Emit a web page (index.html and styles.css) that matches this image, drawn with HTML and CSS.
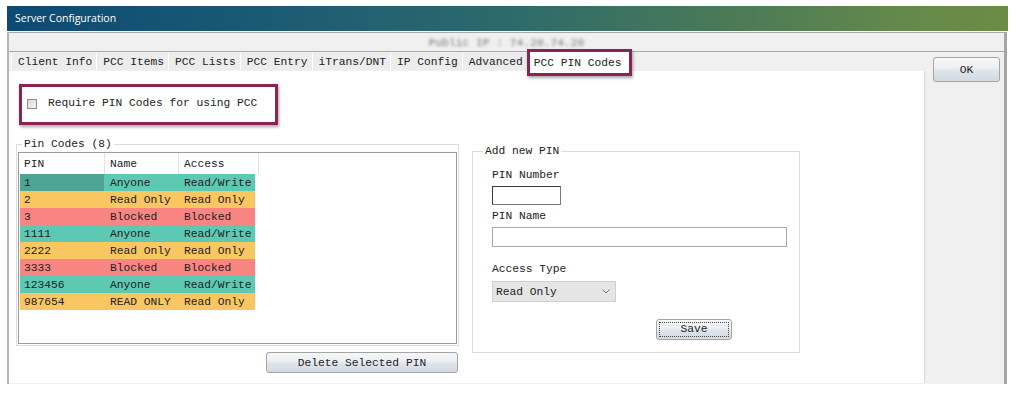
FILE: index.html
```html
<!DOCTYPE html>
<html lang="en">
<head>
<meta charset="utf-8">
<title>Server Configuration</title>
<link rel="stylesheet" href="styles.css">
</head>
<body>
<div class="window">
  <div class="titlebar">Server Configuration</div>
  <div class="frame">
    <div class="addr"><span class="blur">Public IP : 74.20.74.20</span></div>
    <div class="main">
      <div class="tabctl">
        <div class="tabstrip">
          <div class="tab">Client Info</div>
          <div class="tab">PCC Items</div>
          <div class="tab">PCC Lists</div>
          <div class="tab">PCC Entry</div>
          <div class="tab">iTrans/DNT</div>
          <div class="tab">IP Config</div>
          <div class="tab">Advanced</div>
          <div class="tab active">PCC PIN Codes</div>
        </div>
        <div class="page">
          <div class="require">
            <span class="cb"></span>
            <span>Require PIN Codes for using PCC</span>
          </div>
          <div class="cols">
            <div class="leftcol">
              <fieldset class="group pins">
                <legend>Pin Codes (8)</legend>
                <div class="listview">
                  <div class="lv-head"><div>PIN</div><div>Name</div><div>Access</div></div>
                  <div class="lv-row rw"><div class="sel">1</div><div>Anyone</div><div>Read/Write</div></div>
                  <div class="lv-row ro"><div>2</div><div>Read Only</div><div>Read Only</div></div>
                  <div class="lv-row bl"><div>3</div><div>Blocked</div><div>Blocked</div></div>
                  <div class="lv-row rw"><div>1111</div><div>Anyone</div><div>Read/Write</div></div>
                  <div class="lv-row ro"><div>2222</div><div>Read Only</div><div>Read Only</div></div>
                  <div class="lv-row bl"><div>3333</div><div>Blocked</div><div>Blocked</div></div>
                  <div class="lv-row rw"><div>123456</div><div>Anyone</div><div>Read/Write</div></div>
                  <div class="lv-row ro"><div>987654</div><div>READ ONLY</div><div>Read Only</div></div>
                </div>
              </fieldset>
              <button class="btn del">Delete Selected PIN</button>
            </div>
            <fieldset class="group addpin">
              <legend>Add new PIN</legend>
              <div class="lbl l1">PIN Number</div>
              <div class="input num"></div>
              <div class="lbl l2">PIN Name</div>
              <div class="input name"></div>
              <div class="lbl l3">Access Type</div>
              <div class="select">
                <span>Read Only</span>
                <svg width="8" height="5" viewBox="0 0 8 5"><polyline points="0.5,0.5 4,4 7.5,0.5" fill="none" stroke="#707070" stroke-width="1"/></svg>
              </div>
              <button class="btn save"><span class="focus">Save</span></button>
            </fieldset>
          </div>
        </div>
      </div>
      <div class="side"><button class="btn ok">OK</button></div>
    </div>
  </div>
</div>
</body>
</html>
```

FILE: styles.css
```css
body {
  margin: 0;
  background: #fff;
  font-family: "Courier New", "Nimbus Mono PS", "FreeMono", "Liberation Mono", monospace;
  font-size: 11.25px;
  color: #222;
}

.window {
  margin: 6px 0 0 7px;
  width: 1001px;
}

.titlebar {
  height: 25px;
  line-height: 25px;
  padding-left: 8px;
  color: #fff;
  font-family: "Open Sans", "Noto Sans", sans-serif;
  font-size: 10.5px;
  background: linear-gradient(90deg, #0c4a74 0%, #1a5a74 25%, #2c6a6c 50%, #4a7a56 72%, #64894a 90%, #6b8c45 100%);
}

.frame {
  box-sizing: border-box;
  width: 1000px;
  height: 352px;
  border-left: 2px solid #b5b5b5;
  border-right: 3px solid #a6a6a6;
  background: #f0f0f0;
}

.addr {
  box-sizing: border-box;
  margin-top: 1px;
  height: 20px;
  border-top: 1px solid #a9a9a9;
  border-bottom: 1px solid #a9a9a9;
  display: flex;
  align-items: center;
  justify-content: center;
  padding-top: 1px;
}

.blur {
  color: #7a7a7a;
  filter: blur(1.4px);
}

.main {
  display: flex;
  height: 331px;
}

.tabctl {
  width: 916px;
  display: flex;
  flex-direction: column;
}

.tabstrip {
  height: 19px;
  display: flex;
  padding-left: 2px;
}

.tab {
  margin: 1px 0;
  border-left: 1px solid #fff;
  padding: 1px 4px 0 6px;
  line-height: 16px;
  background: #ececec;
  white-space: nowrap;
}

.tab.active {
  margin: -3px 0 -5px;
  border: 3px solid #8a2453;
  padding: 1px 7px 0 4px;
  line-height: 20px;
  background: #fff;
  position: relative;
  z-index: 1;
  box-shadow: 1px 2px 3px rgba(0, 0, 0, 0.35);
}

.page {
  flex: 1;
  background: #fff;
  border-right: 1px solid #d8d8d8;
}

.side {
  flex: 1;
  padding: 5px 0 0 8px;
}

.require {
  box-sizing: border-box;
  margin: 13px 0 0 10px;
  width: 259px;
  height: 41px;
  border: 3px solid #8a2453;
  box-shadow: 1px 2px 3px rgba(0, 0, 0, 0.35);
  display: flex;
  align-items: center;
  padding: 0 0 3px 5px;
}

.cb {
  width: 8px;
  height: 8px;
  border: 1px solid #8f8f8f;
  background: linear-gradient(135deg, #d8d8d8, #f4f4f4);
  margin: 2px 11px 0 0;
}

.cols {
  display: flex;
  align-items: flex-start;
  margin-top: 13px;
  padding-left: 7px;
}

.group {
  margin: 0;
  min-width: 0;
  border: 1px solid #dcdcdc;
}

.group legend {
  padding: 0 2px;
  line-height: 13px;
}

.leftcol {
  width: 443px;
  display: flex;
  flex-direction: column;
}

.pins {
  padding: 1px;
}

.pins legend {
  margin-left: 4px;
}

.listview {
  box-sizing: border-box;
  height: 192px;
  border: 1px solid #9c9c9c;
  background: #fff;
  padding: 0 1px;
}

.lv-head {
  display: grid;
  grid-template-columns: 85px 74px 80px;
  height: 21px;
  line-height: 19px;
  padding-top: 2px;
  box-sizing: border-box;
}

.lv-head div {
  border-right: 1px solid #e3e3e3;
  padding-left: 5px;
  margin-top: -2px;
  padding-top: 2px;
}

.lv-head div:first-child {
  padding-left: 4px;
}

.lv-row {
  display: grid;
  grid-template-columns: 84px 74px 77px;
  width: 235px;
  height: 17px;
  line-height: 15px;
  white-space: nowrap;
}

.lv-row div {
  padding: 2px 0 0 6px;
}

.lv-row div:first-child {
  padding-left: 4px;
}

.rw { background: #5dc9b3; }
.ro { background: #f9c660; }
.bl { background: #f98582; }
.lv-row .sel { background: #4fa593; }

.btn {
  font-family: inherit;
  font-size: inherit;
  color: #222;
  border: 1px solid #a5a5a5;
  border-radius: 3px;
  padding: 0;
  background: linear-gradient(#f6f7f8 0%, #eceef1 45%, #dfe4ea 55%, #d2d9e1 100%);
}

.del {
  align-self: flex-end;
  margin: 6px 1px 0 0;
  width: 192px;
  height: 21px;
}

.addpin {
  margin-left: 13px;
  margin-top: 7px;
  width: 328px;
  box-sizing: border-box;
  padding: 11px 0 12px 19px;
  display: flex;
  flex-direction: column;
  align-items: flex-start;
}

.addpin legend {
  margin-left: -9px;
}

.lbl {
  line-height: 13px;
}

.l2 { margin-top: 5px; }
.l3 { margin-top: 16px; }

.input {
  box-sizing: border-box;
  background: #fff;
  margin-top: 4px;
}

.num {
  width: 69px;
  height: 19px;
  border: 1px solid #7a7a7a;
  border-top-color: #3a3a3a;
  border-left-color: #3a3a3a;
}

.name {
  width: 295px;
  height: 20px;
  border: 1px solid #a9a9a9;
}

.select {
  box-sizing: border-box;
  margin-top: 5px;
  width: 124px;
  height: 21px;
  border: 1px solid #cfcfcf;
  background: #e5e5e5;
  display: flex;
  align-items: center;
  justify-content: space-between;
  padding: 0 5px 0 3px;
}

.save {
  margin: 17px 0 0 164px;
  width: 76px;
  height: 21px;
  padding: 2px;
  display: flex;
}

.focus {
  flex: 1;
  border: 1px dotted #444;
  line-height: 13px;
}

.ok {
  width: 67px;
  height: 25px;
}
```
